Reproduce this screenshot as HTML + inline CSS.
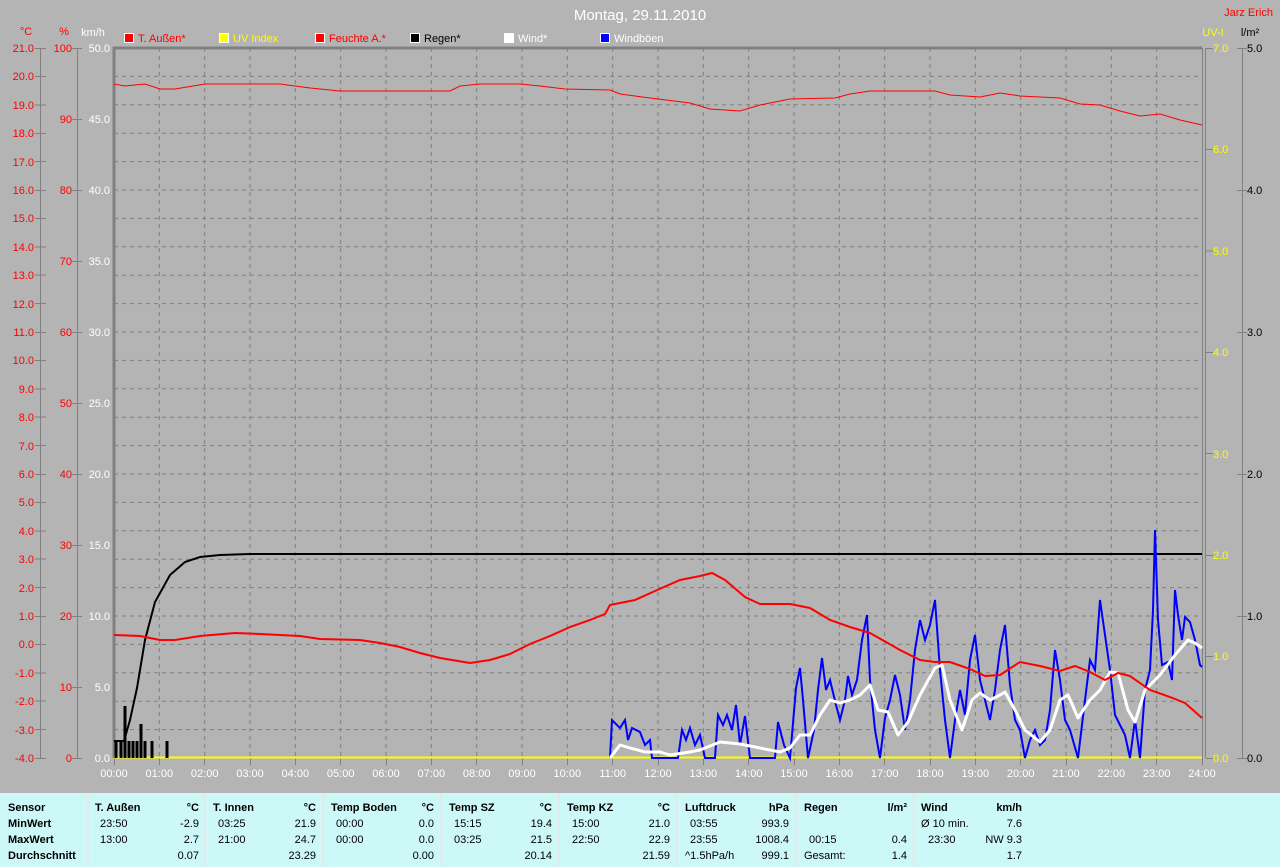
<!DOCTYPE html>
<html><head><meta charset="utf-8"><style>
html,body{margin:0;padding:0;background:#b4b4b4;}
body{width:1280px;height:867px;overflow:hidden;position:relative;font-family:"Liberation Sans",sans-serif;}
svg text{font-family:"Liberation Sans",sans-serif;font-size:11px;}
#tbl{position:absolute;left:0;top:793px;width:1280px;height:74px;background:#ccf8f8;}
.col{position:absolute;top:0;height:74px;border-right:2px solid #e8e8e8;box-sizing:border-box;}
.c{position:absolute;font-size:11px;white-space:nowrap;color:#000;}
.b{font-weight:bold;}
</style></head><body>
<svg width="1280" height="793" style="position:absolute;left:0;top:0">
<text x="640" y="20" fill="#fff" text-anchor="middle" style="font-size:15px">Montag, 29.11.2010</text>
<text x="1273" y="16" fill="#f00" text-anchor="end">Jarz Erich</text>
<!-- legend -->
<g stroke="#fff" stroke-width="1">
<rect x="124.5" y="33.5" width="9" height="9" fill="#f00"/>
<rect x="219.5" y="33.5" width="9" height="9" fill="#ff0"/>
<rect x="315.5" y="33.5" width="9" height="9" fill="#f00"/>
<rect x="410.5" y="33.5" width="9" height="9" fill="#000"/>
<rect x="504.5" y="33.5" width="9" height="9" fill="#fff"/>
<rect x="600.5" y="33.5" width="9" height="9" fill="#00f"/>
</g>
<text x="138" y="42" fill="#f00">T. Außen*</text>
<text x="233" y="42" fill="#ff0">UV Index</text>
<text x="329" y="42" fill="#f00">Feuchte A.*</text>
<text x="424" y="42" fill="#000">Regen*</text>
<text x="518" y="42" fill="#fff">Wind*</text>
<text x="614" y="42" fill="#fff">Windböen</text>
<!-- axis titles -->
<text x="26" y="35" fill="#f00" text-anchor="middle">°C</text>
<text x="64" y="35" fill="#f00" text-anchor="middle">%</text>
<text x="93" y="36" fill="#fff" text-anchor="middle">km/h</text>
<text x="1213" y="36" fill="#ff0" text-anchor="middle">UV-I</text>
<text x="1250" y="36" fill="#000" text-anchor="middle">l/m²</text>
<!-- grid -->
<path fill="none" stroke="#808080" stroke-dasharray="4,4" d="M114 76.4H1202M114 104.8H1202M114 133.2H1202M114 161.6H1202M114 190H1202M114 218.4H1202M114 246.8H1202M114 275.2H1202M114 303.6H1202M114 332H1202M114 360.4H1202M114 388.8H1202M114 417.2H1202M114 445.6H1202M114 474H1202M114 502.4H1202M114 530.8H1202M114 559.2H1202M114 587.6H1202M114 616H1202M114 644.4H1202M114 672.8H1202M114 701.2H1202M114 729.6H1202
M159.3 48V758M204.7 48V758M250 48V758M295.3 48V758M340.7 48V758M386 48V758M431.3 48V758M476.7 48V758M522 48V758M567.3 48V758M612.7 48V758M658 48V758M703.3 48V758M748.7 48V758M794 48V758M839.3 48V758M884.7 48V758M930 48V758M975.3 48V758M1020.7 48V758M1066 48V758M1111.3 48V758M1156.7 48V758"/>
<!-- borders -->
<path fill="none" stroke="#808080" stroke-width="3" d="M114 758V48H1202"/>
<path fill="none" stroke="#808080" stroke-width="1" d="M1202.5 48V758M1205.5 48V758"/>
<!-- left axes -->
<path fill="none" stroke="#808080" d="M40.5 48V758M77.5 48V758M1242.5 48V758
M35 48.5H46M35 76.5H46M35 105H46M35 133.5H46M35 161.5H46M35 190.5H46M35 218.5H46M35 247H46M35 275H46M35 303.5H46M35 332.5H46M35 360.5H46M35 389H46M35 417H46M35 445.5H46M35 474.5H46M35 502.5H46M35 531H46M35 559H46M35 587.5H46M35 616.5H46M35 644.5H46M35 673H46M35 701H46M35 729.5H46M35 758.5H46
M72 48.5H82M72 119.5H82M72 190.5H82M72 261.5H82M72 332.5H82M72 403.5H82M72 474.5H82M72 545.5H82M72 616.5H82M72 687.5H82M72 758.5H82
M1206 48.5H1213M1206 149.5H1213M1206 251H1213M1206 352.5H1213M1206 453.5H1213M1206 555.5H1213M1206 656.5H1213M1206 758.5H1213
M1237 48.5H1247M1237 190.5H1247M1237 332.5H1247M1237 474.5H1247M1237 616.5H1247M1237 758.5H1247
M114.5 758V765M159.5 758V765M204.5 758V765M250.5 758V765M295.5 758V765M340.5 758V765M386.5 758V765M431.5 758V765M476.5 758V765M522.5 758V765M567.5 758V765M612.5 758V765M658.5 758V765M703.5 758V765M748.5 758V765M794.5 758V765M839.5 758V765M884.5 758V765M930.5 758V765M975.5 758V765M1020.5 758V765M1066.5 758V765M1111.5 758V765M1156.5 758V765M1202.5 758V765"/>
<g fill="#f00" text-anchor="end">
<text x="34" y="52">21.0</text><text x="34" y="80">20.0</text><text x="34" y="109">19.0</text><text x="34" y="137">18.0</text><text x="34" y="166">17.0</text><text x="34" y="194">16.0</text><text x="34" y="222">15.0</text><text x="34" y="251">14.0</text><text x="34" y="279">13.0</text><text x="34" y="308">12.0</text><text x="34" y="336">11.0</text><text x="34" y="364">10.0</text><text x="34" y="393">9.0</text><text x="34" y="421">8.0</text><text x="34" y="450">7.0</text><text x="34" y="478">6.0</text><text x="34" y="506">5.0</text><text x="34" y="535">4.0</text><text x="34" y="563">3.0</text><text x="34" y="592">2.0</text><text x="34" y="620">1.0</text><text x="34" y="648">0.0</text><text x="34" y="677">-1.0</text><text x="34" y="705">-2.0</text><text x="34" y="734">-3.0</text><text x="34" y="762">-4.0</text>
<text x="72" y="52">100</text><text x="72" y="123">90</text><text x="72" y="194">80</text><text x="72" y="265">70</text><text x="72" y="336">60</text><text x="72" y="407">50</text><text x="72" y="478">40</text><text x="72" y="549">30</text><text x="72" y="620">20</text><text x="72" y="691">10</text><text x="72" y="762">0</text>
</g>
<g fill="#fff" text-anchor="end">
<text x="110" y="52">50.0</text><text x="110" y="123">45.0</text><text x="110" y="194">40.0</text><text x="110" y="265">35.0</text><text x="110" y="336">30.0</text><text x="110" y="407">25.0</text><text x="110" y="478">20.0</text><text x="110" y="549">15.0</text><text x="110" y="620">10.0</text><text x="110" y="691">5.0</text><text x="110" y="762">0.0</text>
</g>
<g fill="#ff0">
<text x="1213" y="52">7.0</text><text x="1213" y="153">6.0</text><text x="1213" y="255">5.0</text><text x="1213" y="356">4.0</text><text x="1213" y="458">3.0</text><text x="1213" y="559">2.0</text><text x="1213" y="660">1.0</text><text x="1213" y="762">0.0</text>
</g>
<g fill="#000">
<text x="1247" y="52">5.0</text><text x="1247" y="194">4.0</text><text x="1247" y="336">3.0</text><text x="1247" y="478">2.0</text><text x="1247" y="620">1.0</text><text x="1247" y="762">0.0</text>
</g>
<g fill="#fff" text-anchor="middle">
<text x="114" y="777">00:00</text><text x="159.3" y="777">01:00</text><text x="204.7" y="777">02:00</text><text x="250" y="777">03:00</text><text x="295.3" y="777">04:00</text><text x="340.7" y="777">05:00</text><text x="386" y="777">06:00</text><text x="431.3" y="777">07:00</text><text x="476.7" y="777">08:00</text><text x="522" y="777">09:00</text><text x="567.3" y="777">10:00</text><text x="612.7" y="777">11:00</text><text x="658" y="777">12:00</text><text x="703.3" y="777">13:00</text><text x="748.7" y="777">14:00</text><text x="794" y="777">15:00</text><text x="839.3" y="777">16:00</text><text x="884.7" y="777">17:00</text><text x="930" y="777">18:00</text><text x="975.3" y="777">19:00</text><text x="1020.7" y="777">20:00</text><text x="1066" y="777">21:00</text><text x="1111.3" y="777">22:00</text><text x="1156.7" y="777">23:00</text><text x="1202" y="777">24:00</text>
</g>
<!-- data -->
<path stroke="#ff0" stroke-width="2" d="M114 757.5H1202"/>
<polyline fill="none" stroke="#f00" stroke-width="1" points="114,84 125,86 145,84 160,89 175,89 205,84 280,84 310,88 340,91 450,91 460,86 480,84 520,84 540,86 565,89 610,90 620,94 650,98 690,103 710,109 740,111 760,105 790,99 835,98 850,94 870,91 935,91 950,95 980,97 1000,93 1020,96 1060,98 1080,104 1100,105 1120,111 1140,116 1160,114 1180,120 1202,125"/>
<polyline fill="none" stroke="#000" stroke-width="2" points="114,741 124,741 130,720 137,688 145,640 155,602 170,575 185,562 200,557 220,555 250,554 1202,554"/>
<path stroke="#000" stroke-width="3" d="M116 758V741M121 758V741M125 758V706M129 758V741M133 758V741M137 758V741M141 758V724M145 758V741M152 758V741M167 758V741"/>
<polyline fill="none" stroke="#00f" stroke-width="2" points="610,758 612,720 620,728 625,720 628,740 632,728 640,732 645,745 650,740 652,758 678,758 682,730 686,740 690,728 695,745 700,735 705,758 715,758 718,715 723,725 727,715 732,730 736,705 740,745 745,716 750,758 775,758 778,722 784,745 790,758 796,688 800,668 803,700 808,758 814,730 818,690 822,658 826,690 830,680 836,705 840,720 845,700 848,676 852,695 857,680 862,640 867,615 870,680 875,730 880,758 885,718 890,700 895,675 900,695 905,730 910,700 915,650 920,620 925,640 930,625 935,600 940,670 945,720 950,758 955,720 960,690 965,715 970,660 975,635 980,680 985,700 990,720 995,690 1000,650 1005,625 1010,685 1015,720 1020,730 1025,758 1030,740 1035,730 1040,745 1045,740 1050,710 1055,650 1060,680 1065,720 1070,730 1078,758 1085,700 1090,660 1095,670 1100,600 1105,635 1110,670 1115,715 1120,725 1125,735 1130,758 1135,720 1140,758 1145,690 1150,670 1153,610 1155,530 1158,620 1162,665 1168,662 1172,680 1175,590 1178,615 1182,640 1185,617 1190,622 1195,640 1200,665 1202,667"/>
<polyline fill="none" stroke="#fff" stroke-width="3" stroke-linejoin="round" points="610,758 620,745 630,748 645,752 660,752 670,755 690,752 700,750 720,742 740,744 760,748 780,752 790,748 800,735 810,735 820,715 830,700 840,703 850,700 860,695 870,685 878,710 888,712 898,735 908,722 920,695 935,668 942,665 950,700 962,730 972,700 980,693 990,700 1000,695 1005,692 1015,710 1025,730 1040,742 1050,730 1060,700 1068,695 1078,718 1090,700 1100,690 1110,672 1118,673 1128,710 1135,722 1145,690 1160,675 1175,655 1188,640 1195,643 1202,648"/>
<polyline fill="none" stroke="#f00" stroke-width="2" points="114,635 140,636 160,640 175,640 200,636 235,633 260,634 300,636 320,639 360,640 380,643 400,647 420,653 440,658 470,663 490,660 510,654 530,644 550,636 570,627 590,620 605,614 610,605 635,600 655,591 680,580 700,576 712,573 725,580 745,597 760,604 790,604 810,608 830,620 850,627 870,633 900,650 920,660 935,662 950,662 970,669 985,676 1000,675 1020,662 1040,666 1060,671 1075,666 1090,672 1105,680 1118,673 1130,676 1150,690 1170,697 1185,703 1202,718"/>
</svg>
<div id="tbl">
<div class="col" style="left:0;width:89px"></div>
<div class="col" style="left:89px;width:117px"></div>
<div class="col" style="left:206px;width:118px"></div>
<div class="col" style="left:324px;width:118px"></div>
<div class="col" style="left:442px;width:118px"></div>
<div class="col" style="left:560px;width:118px"></div>
<div class="col" style="left:678px;width:119px"></div>
<div class="col" style="left:797px;width:118px"></div>
<div class="c b" style="left:8px;top:9px">Sensor</div>
<div class="c b" style="left:8px;top:25px">MinWert</div>
<div class="c b" style="left:8px;top:41px">MaxWert</div>
<div class="c b" style="left:8px;top:57px">Durchschnitt</div>

<div class="c b" style="left:95px;top:9px">T. Außen</div><div class="c b" style="right:1081px;top:9px">°C</div>
<div class="c" style="left:100px;top:25px">23:50</div><div class="c" style="right:1081px;top:25px">-2.9</div>
<div class="c" style="left:100px;top:41px">13:00</div><div class="c" style="right:1081px;top:41px">2.7</div>
<div class="c" style="right:1081px;top:57px">0.07</div>

<div class="c b" style="left:213px;top:9px">T. Innen</div><div class="c b" style="right:964px;top:9px">°C</div>
<div class="c" style="left:218px;top:25px">03:25</div><div class="c" style="right:964px;top:25px">21.9</div>
<div class="c" style="left:218px;top:41px">21:00</div><div class="c" style="right:964px;top:41px">24.7</div>
<div class="c" style="right:964px;top:57px">23.29</div>

<div class="c b" style="left:331px;top:9px">Temp Boden</div><div class="c b" style="right:846px;top:9px">°C</div>
<div class="c" style="left:336px;top:25px">00:00</div><div class="c" style="right:846px;top:25px">0.0</div>
<div class="c" style="left:336px;top:41px">00:00</div><div class="c" style="right:846px;top:41px">0.0</div>
<div class="c" style="right:846px;top:57px">0.00</div>

<div class="c b" style="left:449px;top:9px">Temp SZ</div><div class="c b" style="right:728px;top:9px">°C</div>
<div class="c" style="left:454px;top:25px">15:15</div><div class="c" style="right:728px;top:25px">19.4</div>
<div class="c" style="left:454px;top:41px">03:25</div><div class="c" style="right:728px;top:41px">21.5</div>
<div class="c" style="right:728px;top:57px">20.14</div>

<div class="c b" style="left:567px;top:9px">Temp KZ</div><div class="c b" style="right:610px;top:9px">°C</div>
<div class="c" style="left:572px;top:25px">15:00</div><div class="c" style="right:610px;top:25px">21.0</div>
<div class="c" style="left:572px;top:41px">22:50</div><div class="c" style="right:610px;top:41px">22.9</div>
<div class="c" style="right:610px;top:57px">21.59</div>

<div class="c b" style="left:685px;top:9px">Luftdruck</div><div class="c b" style="right:491px;top:9px">hPa</div>
<div class="c" style="left:690px;top:25px">03:55</div><div class="c" style="right:491px;top:25px">993.9</div>
<div class="c" style="left:690px;top:41px">23:55</div><div class="c" style="right:491px;top:41px">1008.4</div>
<div class="c" style="left:685px;top:57px">^1.5hPa/h</div><div class="c" style="right:491px;top:57px">999.1</div>

<div class="c b" style="left:804px;top:9px">Regen</div><div class="c b" style="right:373px;top:9px">l/m²</div>
<div class="c" style="left:809px;top:41px">00:15</div><div class="c" style="right:373px;top:41px">0.4</div>
<div class="c" style="left:804px;top:57px">Gesamt:</div><div class="c" style="right:373px;top:57px">1.4</div>

<div class="c b" style="left:921px;top:9px">Wind</div><div class="c b" style="right:258px;top:9px">km/h</div>
<div class="c" style="left:921px;top:25px">Ø 10 min.</div><div class="c" style="right:258px;top:25px">7.6</div>
<div class="c" style="left:928px;top:41px">23:30</div><div class="c" style="right:258px;top:41px">NW 9.3</div>
<div class="c" style="right:258px;top:57px">1.7</div>
</div>
</body></html>
